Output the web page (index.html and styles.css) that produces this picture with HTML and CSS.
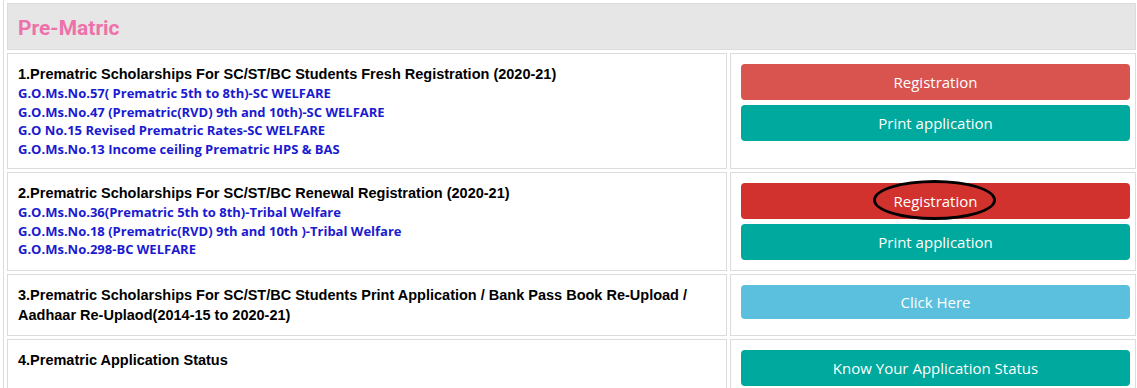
FILE: index.html
```html
<!DOCTYPE html>
<html>

<head>
    <title>Pre-Matric</title>
    <link rel="stylesheet" href="styles.css">
</head>

<body>
    <table class="scheme-table">
        <colgroup>
            <col class="col-info">
            <col class="col-action">
        </colgroup>
        <tr>
            <th colspan="2" class="section-title">Pre-Matric</th>
        </tr>
        <tr>
            <td class="info">
                <div class="item-title">1.Prematric Scholarships For SC/ST/BC Students Fresh Registration (2020-21)</div>
                <a href="#" class="go-link">G.O.Ms.No.57( Prematric 5th to 8th)-SC WELFARE</a>
                <a href="#" class="go-link">G.O.Ms.No.47 (Prematric(RVD) 9th and 10th)-SC WELFARE</a>
                <a href="#" class="go-link">G.O No.15 Revised Prematric Rates-SC WELFARE</a>
                <a href="#" class="go-link">G.O.Ms.No.13 Income ceiling Prematric HPS &amp; BAS</a>
            </td>
            <td class="action">
                <a href="#" class="btn btn-danger">Registration</a>
                <a href="#" class="btn btn-teal">Print application</a>
            </td>
        </tr>
        <tr>
            <td class="info">
                <div class="item-title">2.Prematric Scholarships For SC/ST/BC Renewal Registration (2020-21)</div>
                <a href="#" class="go-link">G.O.Ms.No.36(Prematric 5th to 8th)-Tribal Welfare</a>
                <a href="#" class="go-link">G.O.Ms.No.18 (Prematric(RVD) 9th and 10th )-Tribal Welfare</a>
                <a href="#" class="go-link">G.O.Ms.No.298-BC WELFARE</a>
            </td>
            <td class="action">
                <a href="#" class="btn btn-danger active"><span class="marked">Registration</span></a>
                <a href="#" class="btn btn-teal">Print application</a>
            </td>
        </tr>
        <tr>
            <td class="info">
                <div class="item-title">3.Prematric Scholarships For SC/ST/BC Students Print Application / Bank Pass Book Re-Upload / Aadhaar Re-Uplaod(2014-15 to 2020-21)</div>
            </td>
            <td class="action">
                <a href="#" class="btn btn-info">Click Here</a>
            </td>
        </tr>
        <tr>
            <td class="info">
                <div class="item-title">4.Prematric Application Status</div>
            </td>
            <td class="action">
                <a href="#" class="btn btn-teal">Know Your Application Status</a>
            </td>
        </tr>
    </table>
</body>

</html>
```

FILE: styles.css
```css
body {
    margin: 0;
    padding: 0 0 0 3px;
    background-color: #fff;
    overflow: hidden;
    font-family: Arial, "Liberation Sans", sans-serif;
}

.scheme-table {
    width: 1137px;
    margin-top: -1px;
    table-layout: fixed;
    border: 1px solid #dcdcdc;
    border-spacing: 3px;
}

.col-info {
    width: 720px;
}

.col-action {
    width: 406px;
}

.scheme-table th,
.scheme-table td {
    border: 1px solid #dcdcdc;
    vertical-align: top;
    text-align: left;
}

.section-title {
    background-color: #e6e6e6;
    border-bottom-color: #c8c8c8;
    padding: 12px 10px 8px;
    font-family: Roboto, sans-serif;
    font-weight: bold;
    font-size: 21px;
    line-height: 25px;
    color: #ee72aa;
}

.info {
    padding: 10px;
}

.item-title {
    font-weight: bold;
    font-size: 14.5px;
    line-height: 20px;
    color: #000;
}

.go-link {
    display: block;
    font-family: "Open Sans", sans-serif;
    font-weight: bold;
    font-size: 13px;
    line-height: 18.5px;
    color: #1a1ad0;
    text-decoration: none;
}

.action {
    padding: 10px 5px 10px 10px;
}

.btn {
    display: block;
    height: 36px;
    line-height: 36px;
    border-radius: 4px;
    text-align: center;
    font-family: "Open Sans", sans-serif;
    font-size: 15px;
    color: #fff;
    text-decoration: none;
}

.btn + .btn {
    margin-top: 5px;
}

.btn-danger {
    background-color: #d9534f;
}

.btn-danger.active {
    background-color: #d2322d;
}

.btn-teal {
    background-color: #00a99d;
}

.btn-info {
    height: 34px;
    line-height: 34px;
    background-color: #5bc0de;
}

.marked {
    position: relative;
}

.marked::after {
    content: "";
    position: absolute;
    left: -21px;
    right: -19px;
    top: -11px;
    bottom: -9px;
    border: 3px solid #000;
    border-radius: 50%;
}
```
